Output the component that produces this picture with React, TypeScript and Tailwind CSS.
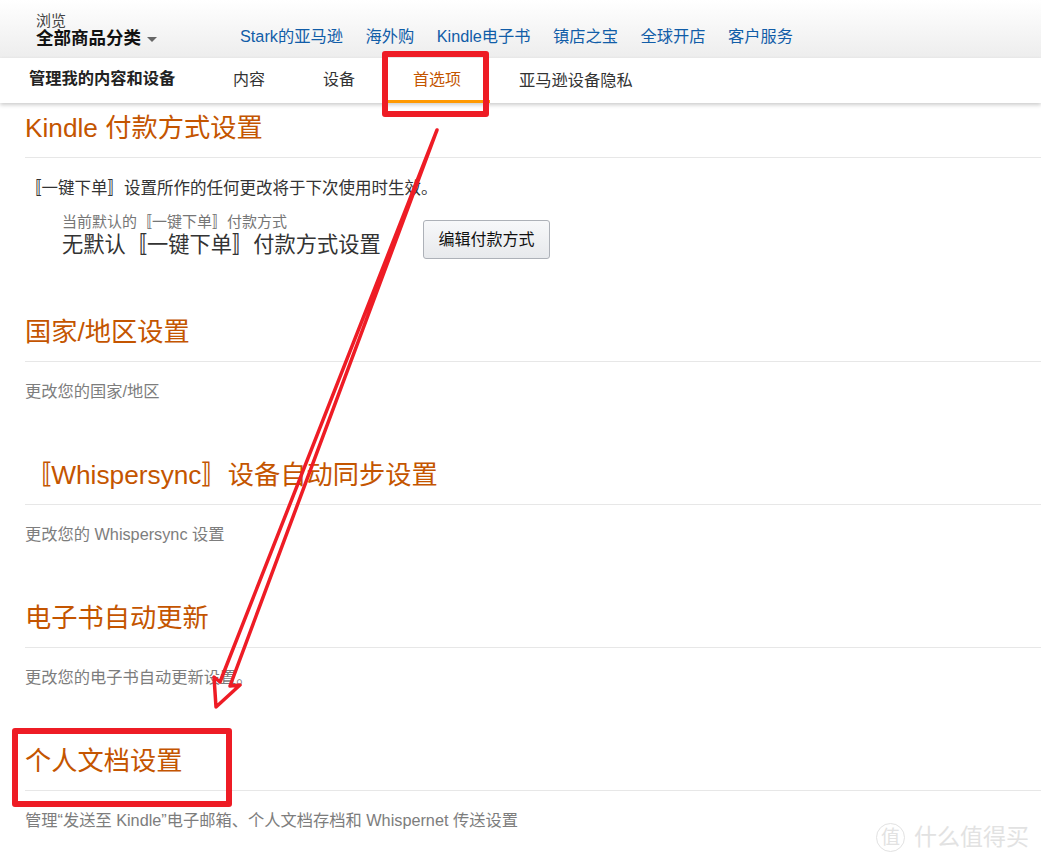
const navLinks = ["Stark的亚马逊", "海外购", "Kindle电子书", "镇店之宝", "全球开店", "客户服务"];

function Section({ title, className, children }: { title: string; className: string; children: React.ReactNode }) {
  return (
    <section className={className}>
      <h2 className="pl-[25px] text-[26.25px] leading-[34px] text-[#c45500]">{title}</h2>
      <div className="mt-[12px] ml-[25px] border-t border-[#e7e7e7]" />
      {children}
    </section>
  );
}

function Desc({ children }: { children: React.ReactNode }) {
  return <p className="pl-[25px] pt-[19px] pb-[1px] text-[16.25px] leading-[20px] text-[#7d7d7d]">{children}</p>;
}

export default function App() {
  return (
    <div
      className="relative h-[863px] w-[1041px] overflow-hidden bg-white text-[#333]"
      style={{ fontFamily: '"Liberation Sans", "Noto Sans CJK SC", sans-serif' }}
    >
      {/* top bar */}
      <header className="flex h-[58px] bg-gradient-to-b from-white to-[#ededed]">
        <div className="w-[240px] pl-[36px] pt-[13px]">
          <div className="text-[15px] leading-[16px] text-[#444]">浏览</div>
          <div className="flex items-center text-[17.5px] font-bold leading-[18px] text-[#111]">
            全部商品分类
            <span className="ml-[6px] mt-[3px] h-0 w-0 border-x-[5px] border-t-[5px] border-x-transparent border-t-[#666]" />
          </div>
        </div>
        <nav className="flex gap-[22.5px] pt-[26px] text-[16.25px] leading-[20px] text-[#115da8]">
          {navLinks.map((link) => (
            <a key={link}>{link}</a>
          ))}
        </nav>
      </header>

      {/* sub nav */}
      <div className="relative z-10 flex h-[45px] bg-white pl-[29px] shadow-[0_2px_4px_rgba(0,0,0,0.2)]">
        <div className="w-[175px] pt-[9px] text-[16.25px] font-bold leading-[22px] text-[#222]">管理我的内容和设备</div>
        <div className="px-[29px] pt-[11px] text-[16px] leading-[22px] text-[#333]">内容</div>
        <div className="px-[29px] pt-[11px] text-[16px] leading-[22px] text-[#333]">设备</div>
        <div className="border-b-[3px] border-[#ff9900] px-[29px] pt-[11px] text-[16px] leading-[22px] text-[#c45500]">首选项</div>
        <div className="px-[29px] pt-[11px] text-[16.25px] leading-[22px] text-[#333]">亚马逊设备隐私</div>
      </div>

      <main>
        <Section title="Kindle 付款方式设置" className="pt-[8px]">
          <p className="pl-[25px] pt-[19px] text-[16.5px] leading-[22px] text-[#333]">〚一键下单〛设置所作的任何更改将于下次使用时生效。</p>
          <div className="flex pl-[62px] pt-[13px]">
            <div className="w-[361px]">
              <div className="text-[15px] leading-[20px] text-[#767676]">当前默认的〚一键下单〛付款方式</div>
              <div className="text-[21.25px] leading-[26px] text-[#333]">无默认〚一键下单〛付款方式设置</div>
            </div>
            <button className="mt-[8px] h-[39px] w-[127px] rounded-[3px] border border-[#adb1b8] bg-gradient-to-b from-[#f7f8fa] to-[#e7e9ec] text-[16px] text-[#111]">
              编辑付款方式
            </button>
          </div>
        </Section>

        <Section title="国家/地区设置" className="pt-[56px]">
          <Desc>更改您的国家/地区</Desc>
        </Section>

        <Section title="〚Whispersync〛设备自动同步设置" className="pt-[56px]">
          <Desc>更改您的 Whispersync 设置</Desc>
        </Section>

        <Section title="电子书自动更新" className="pt-[56px]">
          <Desc>更改您的电子书自动更新设置。</Desc>
        </Section>

        <Section title="个人文档设置" className="pt-[56px]">
          <Desc>管理“发送至 Kindle”电子邮箱、个人文档存档和 Whispernet 传送设置</Desc>
        </Section>
      </main>

      {/* red annotations */}
      <div className="absolute left-[382px] top-[51px] z-20 h-[66px] w-[107px] rounded-[3px] border-[6px] border-[#ee1c25]" />
      <div className="absolute left-[12px] top-[728px] z-20 h-[79px] w-[220px] rounded-[3px] border-[6px] border-[#ee1c25]" />
      <svg className="absolute left-0 top-0 z-20" width="1041" height="863" viewBox="0 0 1041 863" fill="none">
        <path
          d="M437 130 L220 682 L214 677 L216 707 L240 685 L230 686 L437 130 Z"
          stroke="#ee1c25"
          strokeWidth="3.5"
          strokeLinejoin="round"
        />
      </svg>

      {/* watermark */}
      <div className="absolute left-[876px] top-[822px] z-20 flex items-center text-[#e2e2e2]">
        <span className="flex h-[29px] w-[29px] items-center justify-center rounded-full border border-[#e2e2e2] text-[19px] leading-none">值</span>
        <span className="ml-[9px] text-[23px] leading-[30px]">什么值得买</span>
      </div>
    </div>
  );
}
